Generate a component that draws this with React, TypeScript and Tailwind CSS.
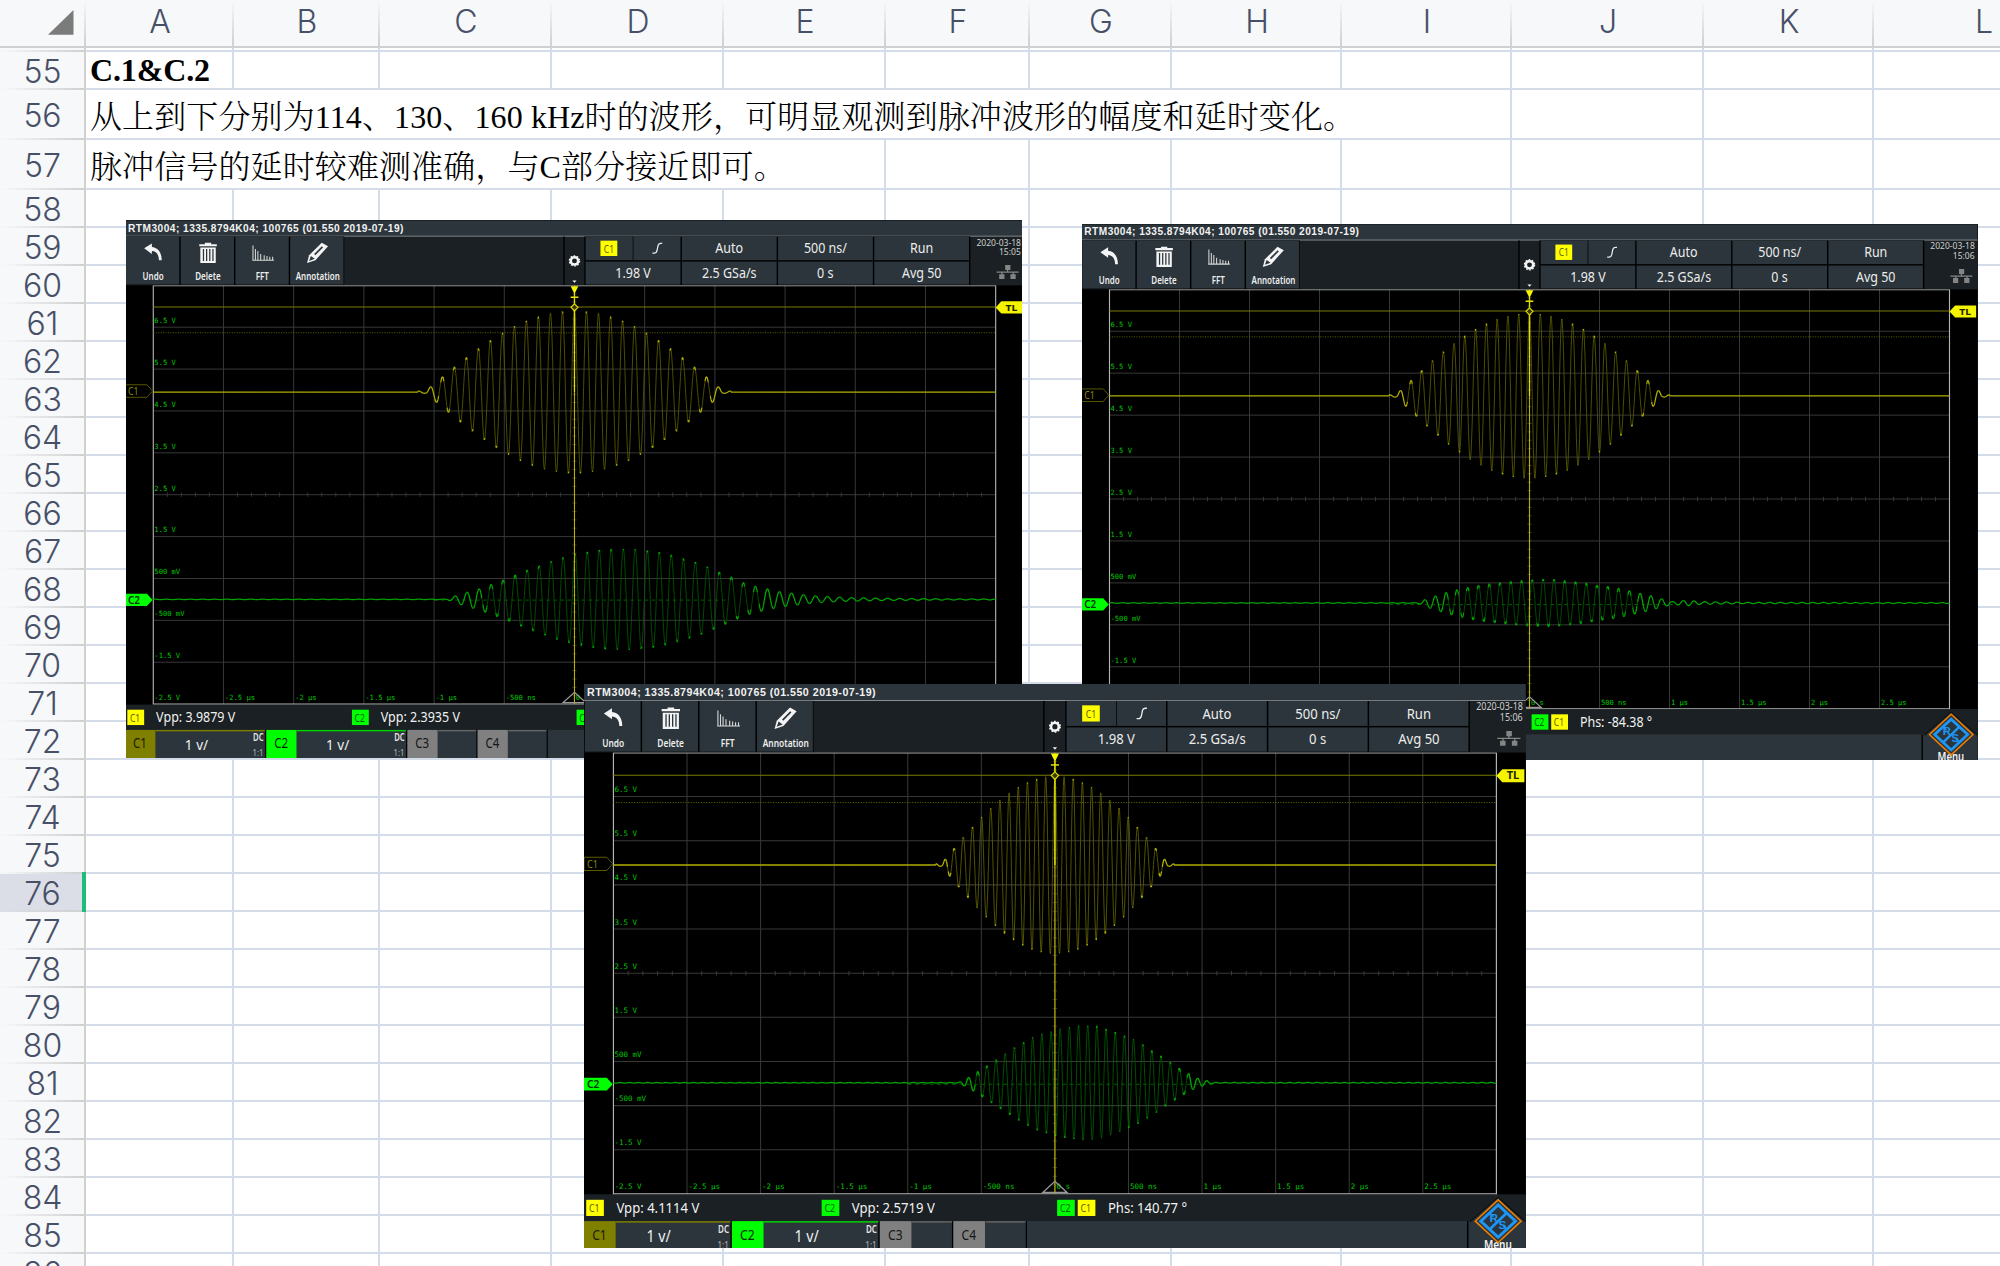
import React from "react";

type Point = [number, number];

interface ScopeData {
  frame: string;
  matrix: string;
  time: string;
  vpp1: string;
  vpp2: string;
  phase: string;
  period: number;
  amp1: number;
  base1: number;
  base2: number;
  shift2: number;
  envelope2: Point[];
}

const COLS: { name: string; w: string }[] = [
  { name: "A", w: "w-[148px]" },
  { name: "B", w: "w-[146px]" },
  { name: "C", w: "w-[172px]" },
  { name: "D", w: "w-[172px]" },
  { name: "E", w: "w-[162px]" },
  { name: "F", w: "w-[144px]" },
  { name: "G", w: "w-[142px]" },
  { name: "H", w: "w-[170px]" },
  { name: "I", w: "w-[170px]" },
  { name: "J", w: "w-[192px]" },
  { name: "K", w: "w-[170px]" },
  { name: "L", w: "w-[220px]" },
];

interface Row {
  n: number;
  h: string;
  text?: string;
  bold?: boolean;
  cover: number;
}

const ROWS: Row[] = [
  { n: 55, h: "h-[38px]", text: "C.1&C.2", bold: true, cover: 0 },
  { n: 56, h: "h-[50px]", text: "从上到下分别为114、130、160 kHz时的波形，可明显观测到脉冲波形的幅度和延时变化。", cover: 8 },
  { n: 57, h: "h-[50px]", text: "脉冲信号的延时较难测准确，与C部分接近即可。", cover: 4 },
  ...Array.from({ length: 29 }, (_, i) => ({ n: 58 + i, h: "h-[38px]", cover: 0 })),
];

const SCOPES: ScopeData[] = [
  {
    frame: "left-[126px] top-[220px] w-[896px] h-[538px]",
    matrix: "[transform:matrix(.702,0,0,.698,-0.8,0.4)]",
    time: "15:05",
    vpp1: "3.9879",
    vpp2: "2.3935",
    phase: "-12.65",
    period: 17.12,
    amp1: 116.5,
    base1: 246,
    base2: 543,
    shift2: 1,
    envelope2: [[458, 0], [470, 5], [487, 10.5], [504, 15], [521, 21.5], [538, 27.7], [555, 35], [572, 42], [589, 48], [606, 54.4], [623, 60], [640, 64.5], [658, 68], [675, 71], [692, 72], [726, 72], [743, 70], [760, 68], [777, 64], [794, 59], [812, 53.5], [829, 47], [846, 39.6], [864, 32], [881, 24], [898, 19], [916, 15], [933, 11], [950, 9], [967, 6.7], [985, 5], [1002, 4], [1036, 2.5], [1080, 1.7], [1150, 1], [1240, 0.6]],
  },
  {
    frame: "left-[1082px] top-[224px] w-[896px] h-[536px]",
    matrix: "[transform:matrix(.7,0,0,.699,-0.5,0.3)]",
    time: "15:06",
    vpp1: "4.0316",
    vpp2: "1.1462",
    phase: "-84.38",
    period: 15.4,
    amp1: 118,
    base1: 245.5,
    base2: 541.8,
    shift2: 4.1,
    envelope2: [[479, 0], [491, 5], [505, 10], [521, 15], [536, 19], [552, 22.5], [567, 25.5], [583, 27.6], [598, 29], [613, 31], [629, 32.4], [659, 34], [675, 34], [690, 32.4], [706, 30.5], [721, 28.6], [736, 25.7], [752, 23.8], [767, 21.4], [783, 17.6], [798, 14], [814, 10.5], [829, 6], [844, 2], [866, 4], [884, 2], [903, 1.8], [947, 1], [1240, 0.6]],
  },
  {
    frame: "left-[584px] top-[684px] w-[942px] h-[564px]",
    matrix: "[transform:matrix(.7358,0,0,.7358,0,0)]",
    time: "15:06",
    vpp1: "4.1114",
    vpp2: "2.5719",
    phase: "140.77",
    period: 12.46,
    amp1: 121,
    base1: 246,
    base2: 542,
    shift2: 7.2,
    envelope2: [[508, 0], [524, 8], [536, 16], [548, 23.5], [561, 32], [573, 40], [585, 48], [597, 55], [610, 62], [622, 67], [635, 70], [647, 74], [672, 77.5], [697, 77.5], [710, 73], [722, 69], [735, 64], [747, 59], [760, 52], [772, 44], [784, 37], [797, 27.6], [809, 20], [821, 13], [833, 6.5], [846, 3], [856, 0.5], [1240, 0.5]],
  },
];

function lerpEnvelope(points: Point[], x: number): number {
  if (x <= points[0][0]) return 0.4;
  for (let i = 1; i < points.length; i++) {
    const [x1, a1] = points[i];
    if (x <= x1) {
      const [x0, a0] = points[i - 1];
      return a0 + ((a1 - a0) * (x - x0)) / (x1 - x0);
    }
  }
  return 0;
}

/* Splits a trace by slope: fast sweeps glow faintly, slow parts brightly. */
function tracePaths(f: (x: number) => number) {
  let dim = "";
  let bright = "";
  const step = 0.5;
  let py = f(40);
  for (let x = 40 + step; x <= 1240; x += step) {
    const y = f(x);
    const seg = `M${(x - step).toFixed(1)} ${py.toFixed(1)}L${x.toFixed(1)} ${y.toFixed(1)}`;
    if (Math.abs(y - py) / step > 6) dim += seg;
    else bright += seg;
    py = y;
  }
  return { dim, bright };
}

const Y_LABELS = ["6.5 V", "5.5 V", "4.5 V", "3.5 V", "2.5 V", "1.5 V", "500 mV", "-500 mV", "-1.5 V", "-2.5 V"];
const X_LABELS = ["-2.5 µs", "-2 µs", "-1.5 µs", "-1 µs", "-500 ns", "0 s", "500 ns", "1 µs", "1.5 µs", "2 µs", "2.5 µs"];

function Plot({ d }: { d: ScopeData }) {
  const half = d.period * 12.5;
  const c1 = tracePaths((x) => {
    const u = (x - 640) / half;
    if (Math.abs(u) > 1.04) return d.base1;
    const env = d.amp1 * Math.max(Math.cos((Math.PI / 2) * Math.min(Math.abs(u), 1)), 0.015);
    return d.base1 - env * Math.cos((2 * Math.PI * (x - 640)) / d.period);
  });
  const c2 = tracePaths(
    (x) => d.base2 - lerpEnvelope(d.envelope2, x) * Math.cos((2 * Math.PI * (x - 640 - d.shift2)) / d.period)
  );
  return (
    <svg width="1280" height="601" viewBox="0 93 1280 601" className="block shrink-0 bg-black">
      <g stroke="#383838" strokeWidth="1.4">
        {Array.from({ length: 11 }, (_, i) => (
          <line key={i} x1={140 + i * 100} x2={140 + i * 100} y1="93" y2="693" />
        ))}
        {Array.from({ length: 9 }, (_, i) => (
          <line key={i} x1="40" x2="1240" y1={153 + i * 60} y2={153 + i * 60} />
        ))}
        {Array.from({ length: 59 }, (_, i) => (
          <line key={i} x1={60 + i * 20} x2={60 + i * 20} y1="390" y2="396" />
        ))}
        {Array.from({ length: 49 }, (_, i) => (
          <line key={i} x1="637" x2="643" y1={105 + i * 12} y2={105 + i * 12} />
        ))}
      </g>
      <path d="M40 694V93.7H1240V694M40 693H1240" fill="none" stroke="#b4b4b4" strokeWidth="1.6" />
      <g fill="#00c800" fontSize="10.2" fontFamily="'DejaVu Sans Mono', monospace">
        {Y_LABELS.map((t, i) => (
          <text key={t} x="41.5" y={147 + i * 60}>{t}</text>
        ))}
        {X_LABELS.map((t, i) => (
          <text key={t} x={142 + i * 100} y="687">{t}</text>
        ))}
      </g>
      <path d="M40 124H1240" stroke="#7a7a00" strokeWidth="1.5" />
      <path d="M40 161H1240" stroke="#6e6e00" strokeWidth="1.2" strokeDasharray="1.5 2" />
      <path d="M440 544H860" stroke="#006e00" strokeWidth="1.2" strokeDasharray="5 5" />
      <path d={c1.dim} stroke="#5c5c00" strokeWidth="1.2" fill="none" />
      <path d={c1.bright} stroke="#b0b000" strokeWidth="1.8" fill="none" />
      <path d={c2.dim} stroke="#005800" strokeWidth="1.2" fill="none" />
      <path d={c2.bright} stroke="#00a800" strokeWidth="1.8" fill="none" />
      <path d="M640 93V693" stroke="#b8b000" strokeWidth="1.6" />
      <path d="M640 105V246" stroke="#dede00" strokeWidth="1.8" />
      <path d="M634.5 94.5H645.5L640 105.5Z" fill="#f6f600" />
      <path d="M634.5 110H645.5" stroke="#e6e600" strokeWidth="2" />
      <path d="M640 119.5L645 124.5L640 129.5L635 124.5Z" fill="#3a3a00" stroke="#d8d800" strokeWidth="1.7" />
      <path d="M623.5 691L640 676L656.5 691Z" fill="none" stroke="#9a9a9a" strokeWidth="1.7" />
      <path d="M0 235.5H31L39 244.5L31 253.5H0Z" fill="#000" stroke="#5f5f00" strokeWidth="1.3" />
      <path d="M0 535H31L39 543.8L31 552.6H0Z" fill="#00ff00" />
      <path d="M1240 124.7L1248 116H1278V133.4H1248Z" fill="#f4f400" />
      <g fontFamily="'Noto Sans', sans-serif" fontSize="15">
        <text x="4" y="250" fill="#8a8a00" textLength="15" lengthAdjust="spacingAndGlyphs">C1</text>
        <text x="4" y="549.3" fill="#003000" fontWeight="600" textLength="17" lengthAdjust="spacingAndGlyphs">C2</text>
        <text x="1254" y="129.6" fill="#222200" fontWeight="700" fontSize="13.5" textLength="17" lengthAdjust="spacingAndGlyphs">TL</text>
      </g>
    </svg>
  );
}

function Badge({ label }: { label: "C1" | "C2" }) {
  return (
    <span
      className={
        "flex h-[22px] w-[24px] shrink-0 items-center justify-center text-[15px] leading-none " +
        (label === "C1" ? "bg-[#ffff00] text-[#5c5c00]" : "bg-[#00ff00] text-[#005c00]")
      }
    >
      <span className="inline-block scale-x-[.8]">{label}</span>
    </span>
  );
}

function ToolButton({ label, children }: { label: string; children: React.ReactNode }) {
  return (
    <div className="flex h-[69px] w-[76px] flex-col items-center bg-[#2b353b] pl-[1.5px]">
      <svg width="32" height="32" viewBox="0 0 32 32" className="mt-[7px] shrink-0">{children}</svg>
      <span className="mt-[8px] inline-block scale-x-[.76] whitespace-nowrap text-[15px] font-semibold leading-[20px] text-[#eeeeee]">{label}</span>
    </div>
  );
}

function Cell({ top, bottom }: { top: React.ReactNode; bottom: string }) {
  return (
    <div className="flex w-[135px] shrink-0 flex-col gap-[1.5px] text-[20px] leading-none text-[#ededed]">
      <div className="flex h-[34px] items-center justify-center bg-[#2b353b]">{top}</div>
      <div className="flex h-[33.5px] items-center justify-center bg-[#2b353b] pb-[1px]">
        <span className="inline-block scale-x-[.89] whitespace-nowrap">{bottom}</span>
      </div>
    </div>
  );
}

function Narrow({ children }: { children: React.ReactNode }) {
  return <span className="inline-block scale-x-[.89] whitespace-nowrap">{children}</span>;
}

function Measure({ badges, text, width }: { badges: ("C1" | "C2")[]; text: React.ReactNode; width: string }) {
  return (
    <div className={"flex shrink-0 items-center gap-[4px] " + width}>
      {badges.map((b) => (
        <Badge key={b} label={b} />
      ))}
      <span className="ml-[13px] inline-block origin-left scale-x-[.89] whitespace-nowrap text-[20px] leading-none text-[#f2f2f2]">{text}</span>
    </div>
  );
}

function ActiveChannel({ label, tab, line }: { label: string; tab: string; line: string }) {
  return (
    <div className="flex w-[201px] shrink-0 border-r-[2px] border-black">
      <div className={"flex w-[43px] items-start justify-center pt-[9px] text-[20px] leading-[20px] " + tab}>
        <span className="inline-block scale-x-[.82]">{label}</span>
      </div>
      <div className={"flex flex-1 justify-between border-t-[2px] pl-[42px] pr-[2px] " + line}>
        <span className="mt-[8px] inline-block origin-left scale-x-[.92] whitespace-nowrap text-[21px] leading-[22px] text-[#f0f0f0]">1 v/</span>
        <div className="flex flex-col items-end text-[14px] leading-[18px]">
          <span className="inline-block origin-right scale-x-[.78] font-semibold text-[#e6e6e6]">DC</span>
          <span className="mt-[4px] inline-block origin-right scale-x-[.78] text-[#b8b8b8]">1:1</span>
        </div>
      </div>
    </div>
  );
}

function IdleChannel({ label }: { label: string }) {
  return (
    <div className="flex w-[100px] shrink-0 border-r-[2px] border-black">
      <div className="flex w-[43px] items-start justify-center bg-[#808080] pt-[9px] text-[20px] leading-[20px] text-[#151515]">
        <span className="inline-block scale-x-[.82]">{label}</span>
      </div>
      <div className="ml-px flex-1 border-t-[2px] border-[#666666] bg-[#2b353b]" />
    </div>
  );
}

function Scope({ d }: { d: ScopeData }) {
  return (
    <div className={"absolute overflow-hidden bg-black " + d.frame}>
      <div className={"relative flex h-[775px] w-[1280px] origin-top-left flex-col bg-[#2b353b] font-['Noto_Sans',sans-serif] " + d.matrix}>
        <div className="flex h-[22px] shrink-0 items-center pl-[4px]">
          <span className="whitespace-nowrap font-['Liberation_Sans',sans-serif] text-[14.5px] font-bold leading-none tracking-[0.65px] text-[#f2f2f2]">
            RTM3004; 1335.8794K04; 100765 (01.550 2019-07-19)
          </span>
        </div>
        <div className="flex h-[71px] shrink-0 border-t-[1.5px] border-[#b4b4b4] bg-[#1a2023]">
          <div className="flex gap-[2px] bg-black pl-[1px] pr-[1px]">
            <ToolButton label="Undo">
              <path d="M3 10L14 3V8C23 9 28 16 28 27H24C24 19 20 14 14 14V18Z" fill="#f4f4f4" />
            </ToolButton>
            <ToolButton label="Delete">
              <path d="M3.500 4H11.500V2H20.500V4H28.500V7H3.500Z" fill="#f4f4f4" />
              <path d="M5 9H27V31H5Z" fill="#f4f4f4" />
              <path d="M9.500 11V28M14 11V28M18.500 11V28M23 11V28" stroke="#2b353b" strokeWidth="1.8" />
            </ToolButton>
            <ToolButton label="FFT">
              <path d="M1 27H32M2 6V27M5.500 11V27M9 14V27M13 18V27M18 20V27M22 21V27M26 22V27M30 22V27" stroke="#d8d8d8" strokeWidth="1.5" fill="none" />
            </ToolButton>
            <ToolButton label="Annotation">
              <path d="M1 31L4 20L22 2L31 7L13 27Z" fill="#f4f4f4" />
              <path d="M4 28L6.500 21L12 25Z" fill="#2b353b" />
              <path d="M12 19L23 8" stroke="#2b353b" strokeWidth="2.4" />
            </ToolButton>
          </div>
          <div className="w-[312px] shrink-0" />
          <div className="flex w-[32px] shrink-0 flex-col items-center border-x-[2px] border-black">
            <svg width="28" height="69" viewBox="626 23 28 69" className="shrink-0">
              <circle cx="640" cy="58" r="5.300" fill="none" stroke="#f4f4f4" strokeWidth="3.600" />
              <circle cx="640" cy="58" r="7.300" fill="none" stroke="#f4f4f4" strokeWidth="1.800" strokeDasharray="2.400 2.200" />
              <path d="M637 86H643L640 89.500Z" fill="#f4f4f4" />
            </svg>
          </div>
          <div className="flex gap-[2px] bg-black pr-[2px]">
            <Cell
              top={
                <>
                  <span className="flex w-[67px] justify-center"><Badge label="C1" /></span>
                  <span className="h-full w-[2px] bg-black" />
                  <span className="flex w-[67px] justify-center">
                    <svg width="16" height="18" viewBox="0 0 16 18">
                      <path d="M1 16H4C6.500 16 7 14.500 7.500 12.500L9 5C9.500 3 10 2 12.500 2H15" fill="none" stroke="#ededed" strokeWidth="1.800" />
                    </svg>
                  </span>
                </>
              }
              bottom="1.98 V"
            />
            <Cell top={<Narrow>Auto</Narrow>} bottom="2.5 GSa/s" />
            <Cell top={<Narrow>500 ns/</Narrow>} bottom="0 s" />
            <Cell top={<Narrow>Run</Narrow>} bottom="Avg 50" />
          </div>
          <div className="flex min-w-0 flex-1 flex-col items-end pr-[4px] text-[14px] leading-[14px] text-[#d0d0d0]">
            <span className="mt-px inline-block origin-right scale-x-[.87] whitespace-nowrap">2020-03-18</span>
            <span className="inline-block origin-right scale-x-[.87]">{d.time}</span>
            <svg width="32" height="21" viewBox="0 0 32 21" className="mr-[3px] mt-[12px]">
              <path d="M12.500 0H20V7H12.500ZM4 13H11.500V20H4ZM20 13H27.500V20H20Z" fill="#858585" />
              <path d="M0 10H32M16 6V10M8 10V14M24 10V14" stroke="#858585" strokeWidth="1.800" />
            </svg>
          </div>
        </div>
        <Plot d={d} />
        <div className="flex h-[36px] shrink-0 bg-[#1a2023] pl-[2.500px]">
          <Measure badges={["C1"]} text={`Vpp: ${d.vpp1} V`} width="w-[320px]" />
          <Measure badges={["C2"]} text={`Vpp: ${d.vpp2} V`} width="w-[320px]" />
          <Measure
            badges={["C2", "C1"]}
            width="w-[320px]"
            text={<>Phs: {d.phase} °</>}
          />
        </div>
        <div className="flex min-h-0 flex-1 bg-[#2b353b]">
          <ActiveChannel label="C1" tab="bg-[#808000] text-[#1c1c00]" line="border-[#808000]" />
          <ActiveChannel label="C2" tab="bg-[#00ff00] text-[#002800]" line="border-[#00d400]" />
          <IdleChannel label="C3" />
          <IdleChannel label="C4" />
          <div className="w-[600px] shrink-0 border-r-[2px] border-black" />
          <div className="flex-1" />
        </div>
        <svg width="80" height="80" viewBox="1200 695 80 80" className="absolute left-[1200px] top-[695px]">
          <path d="M1242 697L1280 731V775H1204V731Z" fill="#2b353b" />
          <path d="M1204 731L1242 697.500L1280 731" fill="none" stroke="#0c0f10" strokeWidth="1.500" />
          <text x="1223" y="768" fill="#f2f2f2" fontFamily="'Noto Sans', sans-serif" fontSize="17" fontWeight="600" textLength="38" lengthAdjust="spacingAndGlyphs">Menu</text>
          <path d="M1242.400 701L1273.500 730L1242.400 759L1211.300 730Z" fill="#2b353b" stroke="#ef7d00" strokeWidth="2.200" />
          <path d="M1242.400 708L1266 730L1242.400 752L1218.800 730Z" fill="none" stroke="#1e96f5" strokeWidth="4" />
          <path d="M1231 741L1254 719" stroke="#1e96f5" strokeWidth="3.500" />
          <path d="M1231 719L1236 724M1249 736L1254 741" stroke="#1e96f5" strokeWidth="2" />
          <g fill="#1e96f5" fontFamily="'Liberation Sans', sans-serif" fontWeight="700" fontSize="16">
            <text x="1230.500" y="731">R</text>
            <text x="1243" y="741">S</text>
          </g>
        </svg>
      </div>
    </div>
  );
}

export default function App() {
  return (
    <div className="relative h-[1266px] w-[2000px] overflow-hidden bg-white font-['Inter',sans-serif] text-[#485068]">
      <div className="flex h-[48px] border-b-2 border-[#d0d0d0] bg-[#f6f8fa]">
        <div className="relative w-[86px] shrink-0">
          <svg width="26" height="25" viewBox="0 0 26 25" className="ml-[48px] mt-[10px]">
            <path d="M25.500 0V24.700H0Z" fill="#7b7b7b" />
          </svg>
          <div className="absolute right-0 top-0 h-full w-[2px] bg-linear-to-b from-[#f6f8fa] to-[#d0d0d0]" />
        </div>
        {COLS.map((c) => (
          <div key={c.name} className={"relative flex shrink-0 items-center justify-center pt-[2px] text-[32px] font-light leading-[40px] " + c.w}>
            <span className="-mt-[5px]">{c.name}</span>
            <div className="absolute right-0 top-0 h-full w-[2px] bg-linear-to-b from-[#f6f8fa] to-[#d0d0d0]" />
          </div>
        ))}
      </div>
      <div className="flex h-[4px]">
        <div className="flex w-[86px] shrink-0 flex-col justify-end border-r-2 border-[#d0d0d0] bg-[#f6f8fa]">
          <div className="h-[2px] bg-linear-to-r from-[#f6f8fa] to-[#d0d0d0]" />
        </div>
        {COLS.map((c) => (
          <div key={c.name} className={"shrink-0 border-b-2 border-r-2 border-[#d4dbe9] " + c.w} />
        ))}
      </div>
      {ROWS.map((r) => (
        <div key={r.n} className={"flex " + r.h}>
          <div
            className={
              "relative flex w-[86px] shrink-0 items-center justify-center border-r-2 border-[#d0d0d0] pl-px pt-[2px] text-[32px] font-light leading-none " +
              (r.n === 76 ? "bg-[#dcdee7]" : "bg-[#f6f8fa]")
            }
          >
            <span>{r.n}</span>
            <div className="absolute bottom-0 left-0 h-[2px] w-full bg-linear-to-r from-transparent to-[#d0d0d0]" />
            {r.n === 76 && <div className="absolute -right-[2px] -top-[2px] z-10 h-[40px] w-[4px] bg-[#1fbb7d]" />}
          </div>
          {COLS.map((c, i) => (
            <div
              key={c.name}
              className={
                "flex shrink-0 items-center border-b-2 border-b-[#d4dbe9] " +
                (i < r.cover ? "" : "border-r-2 border-r-[#d4dbe9] ") +
                c.w
              }
            >
              {i === 0 && r.text && (
                <span
                  className={
                    "z-10 ml-[4px] whitespace-nowrap font-['Liberation_Serif','Noto_Serif_CJK_SC','Noto_Sans_CJK_SC',serif] text-[32px] leading-[36px] text-black " +
                    (r.bold ? "font-bold tracking-[-0.15px]" : "pt-[5px] font-light tracking-[0.11px]")
                  }
                >
                  {r.text}
                </span>
              )}
            </div>
          ))}
        </div>
      ))}
      {SCOPES.map((d) => (
        <Scope key={d.vpp1} d={d} />
      ))}
    </div>
  );
}
